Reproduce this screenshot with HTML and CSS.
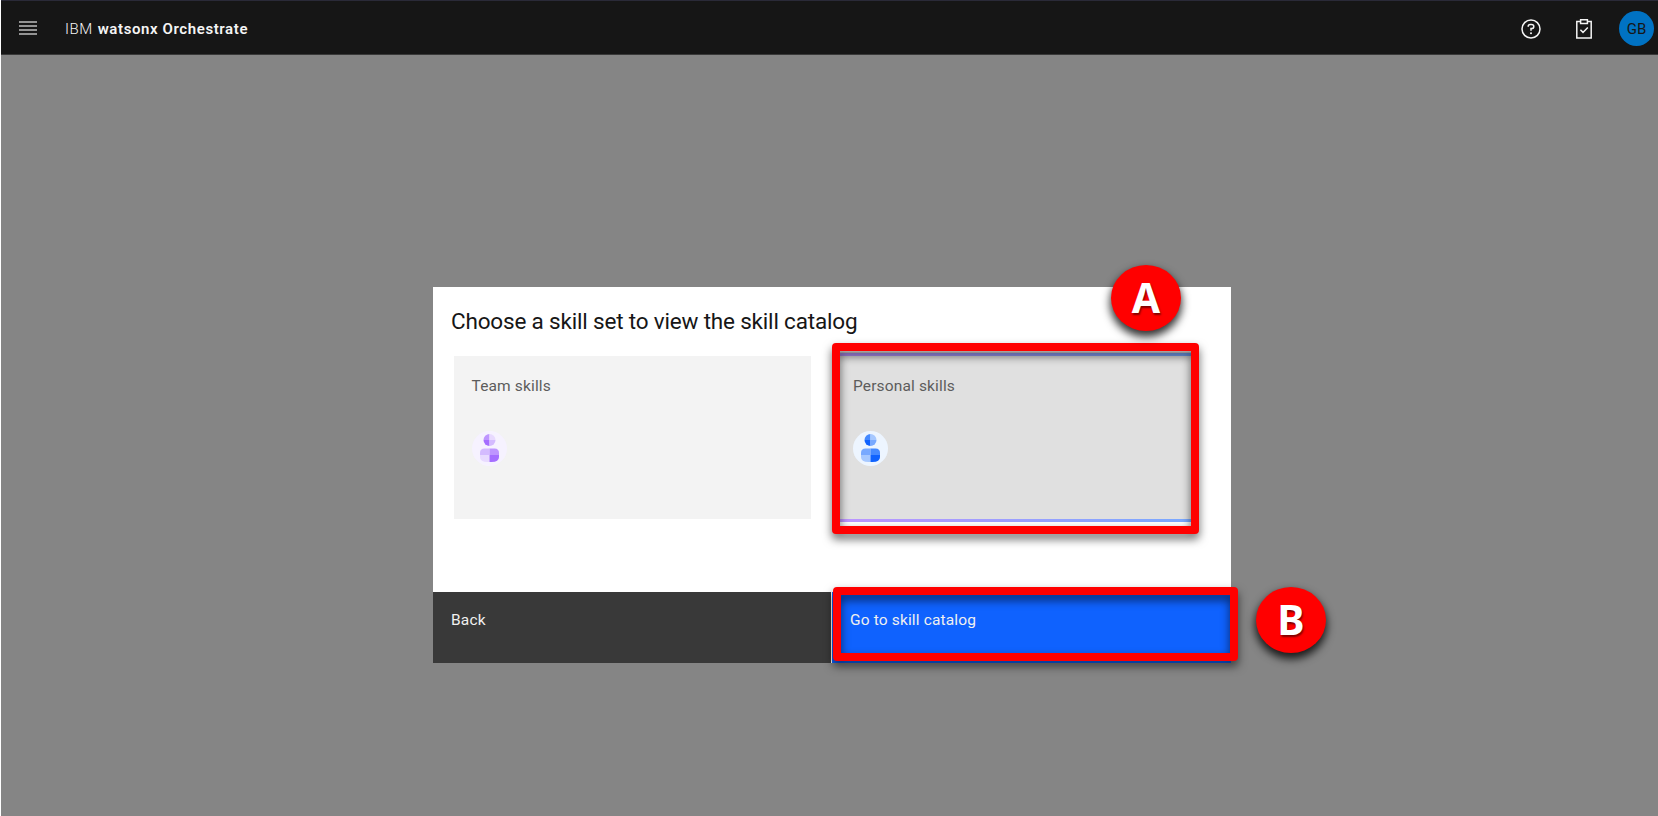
FILE: index.html
```html
<!DOCTYPE html>
<html lang="en">
<head>
<meta charset="utf-8">
<title>IBM watsonx Orchestrate</title>
<link rel="stylesheet" href="styles.css">
</head>
<body>
<div class="app">
  <header class="header">
    <svg class="menu" width="18" height="14" viewBox="0 0 18 14"><path d="M0 1h18M0 5h18M0 9h18M0 13h18" stroke="#bdbdbd" stroke-width="1.7"/></svg>
    <div class="brand"><span class="brand-ibm">IBM</span><span class="brand-product">watsonx Orchestrate</span></div>
    <div class="actions">
      <svg class="help" width="20" height="20" viewBox="0 0 20 20" fill="none" stroke="#f4f4f4" stroke-width="1.5"><circle cx="10" cy="10" r="9"/><path d="M7.2 7.8V7.4C7.2 6.2 8 5.4 9.2 5.4h1.4c1.3 0 2.2.8 2.2 2.1s-.9 2.1-2.2 2.1H10v2.1"/><circle cx="10" cy="14.2" r="1" fill="#f4f4f4" stroke="none"/></svg>
      <svg class="tasks" width="16" height="20" viewBox="0 0 16 20" fill="none" stroke="#f4f4f4" stroke-width="1.5"><path d="M4.6 2.600H.8v16.400h14.4V2.600h-3.800M4.6 .8h6.8v3.700H4.6zM4.4 10.8l2.6 2.6 4.8-5"/></svg>
      <div class="avatar">GB</div>
    </div>
  </header>
  <main class="page">
    <section class="modal">
      <div class="modal-body">
        <h1 class="title">Choose a skill set to view the skill catalog</h1>
        <div class="tiles">
          <div class="tile team">
            <span class="tile-label team-label">Team skills</span>
            <svg class="persona" width="35" height="35" viewBox="0 0 35 35"><circle cx="17.5" cy="17.5" r="17.5" fill="#f6f2ff"/><path d="M17.5 3v6h-6a6 6 0 0 1 6-6z" fill="#be95ff"/><path d="M17.5 3v6h6a6 6 0 0 0-6-6z" fill="#e8daff"/><path d="M11.5 9h6v6a6 6 0 0 1-6-6z" fill="#a56eff"/><path d="M23.5 9h-6v6a6 6 0 0 0 6-6z" fill="#d4bbff"/><path d="M8 24v-2q0-4.500 4.500-4.500h5V24z" fill="#d4bbff"/><path d="M17.500 17.500h5q4.500 0 4.500 4.500v2h-9.500z" fill="#be95ff"/><path d="M8 24h9.500v7h-2Q8 31 8 26z" fill="#e8daff"/><path d="M17.500 24H27v2q0 5-7.500 5h-2z" fill="#a56eff"/></svg>
          </div>
          <div class="tile personal">
            <span class="tile-label personal-label">Personal skills</span>
            <svg class="persona" width="35" height="35" viewBox="0 0 35 35"><circle cx="17.5" cy="17.5" r="17.5" fill="#edf5ff"/><path d="M17.5 3v6h-6a6 6 0 0 1 6-6z" fill="#4589ff"/><path d="M17.5 3v6h6a6 6 0 0 0-6-6z" fill="#a6c8ff"/><path d="M11.5 9h6v6a6 6 0 0 1-6-6z" fill="#0f62fe"/><path d="M23.5 9h-6v6a6 6 0 0 0 6-6z" fill="#78a9ff"/><path d="M8 24v-2q0-4.500 4.500-4.500h5V24z" fill="#78a9ff"/><path d="M17.500 17.500h5q4.500 0 4.500 4.500v2h-9.500z" fill="#4589ff"/><path d="M8 24h9.500v7h-2Q8 31 8 26z" fill="#a6c8ff"/><path d="M17.500 24H27v2q0 5-7.500 5h-2z" fill="#0f62fe"/></svg>
          </div>
        </div>
      </div>
      <footer class="modal-footer">
        <div class="btn back"><span class="back-label">Back</span></div>
        <div class="btn go"><span class="go-label">Go to skill catalog</span></div>
      </footer>
    </section>
  </main>
  <div class="frame frame-a"></div>
  <div class="frame frame-b"></div>
  <div class="marker marker-a">A</div>
  <div class="marker marker-b">B</div>
</div>
</body>
</html>
```
FILE: styles.css
```css
* { box-sizing: border-box; }
body { margin: 0; background: #fff; font-family: Roboto, "Liberation Sans", sans-serif; font-size: 15.500px; }
.app { position: relative; height: 816px; overflow: hidden; padding-left: 1px; display: flex; flex-direction: column; }
.header { height: 55px; flex: none; background: #161616; border-top: 1px solid #2a2a38; border-bottom: 1px solid #393939; display: flex; align-items: center; padding: 0 4px 0 17.500px; color: #f4f4f4; }
.menu { margin-top: 1px; }
.brand { margin-left: 28.500px; margin-top: 2px; font-size: 15px; line-height: 20px; display: flex; gap: 5px; white-space: nowrap; }
.brand-ibm { font-weight: 300; letter-spacing: .5px; }
.brand-product { font-weight: 600; letter-spacing: .6px; }
.actions { margin-left: auto; display: flex; align-items: center; margin-top: 2px; }
.tasks { margin-left: 35px; }
.avatar { margin-left: 27px; width: 35px; height: 35px; border-radius: 50%; background: #0072c3; color: #161616; font-size: 15px; line-height: 37px; text-align: center; }
.page { flex: 1; background: #858585; padding: 232px 0 0 432px; }
.modal { width: 798px; height: 376px; background: #fff; display: flex; flex-direction: column; }
.modal-body { height: 305px; padding: 19px 0 0 18px; }
.title { margin: 0; font-size: 22.500px; line-height: 30px; font-weight: 400; letter-spacing: -.18px; color: #161616; white-space: nowrap; }
.tiles { display: flex; gap: 23px; padding: 16px 0 0 3px; }
.tile { display: flex; flex-direction: column; color: #5c5c5c; }
.tile-label { line-height: 20px; letter-spacing: .15px; }
.persona { margin-top: 35px; }
.team { width: 357px; height: 163px; margin-top: 4px; padding: 20px 17.500px; background: #f3f3f3; }
.personal { width: 361px; height: 170px; padding: 24px 19px; background: linear-gradient(90deg, #be95ff, #78a9ff) 0 1px / 100% 3px no-repeat, linear-gradient(90deg, #be95ff, #78a9ff) bottom / 100% 3px no-repeat, #e0e0e0; }
.modal-footer { height: 71px; display: flex; gap: 1px; }
.btn { line-height: 20px; padding: 18px; color: #f0f0f0; letter-spacing: .15px; }
.back { width: 398px; background: #393939; }
.go { width: 399px; background: #0f62fe; }
.frame { position: absolute; border: 8px solid #f00; border-radius: 4px; filter: drop-shadow(0 5px 5px rgba(0,0,0,.6)); }
.frame-a { left: 832px; top: 343px; width: 367px; height: 191px; }
.frame-b { left: 833px; top: 587px; width: 405px; height: 74px; }
.marker { position: absolute; width: 70px; height: 66px; border-radius: 50%; background: #f00; color: #fff; font: 700 41px/65px "Noto Sans", sans-serif; text-align: center; box-shadow: 0 5px 8px 1px rgba(0,0,0,.8); text-shadow: 1px 2px 2px rgba(0,0,0,.5); }
.marker-a { left: 1111px; top: 265px; }
.marker-b { left: 1256px; top: 587px; }
```
